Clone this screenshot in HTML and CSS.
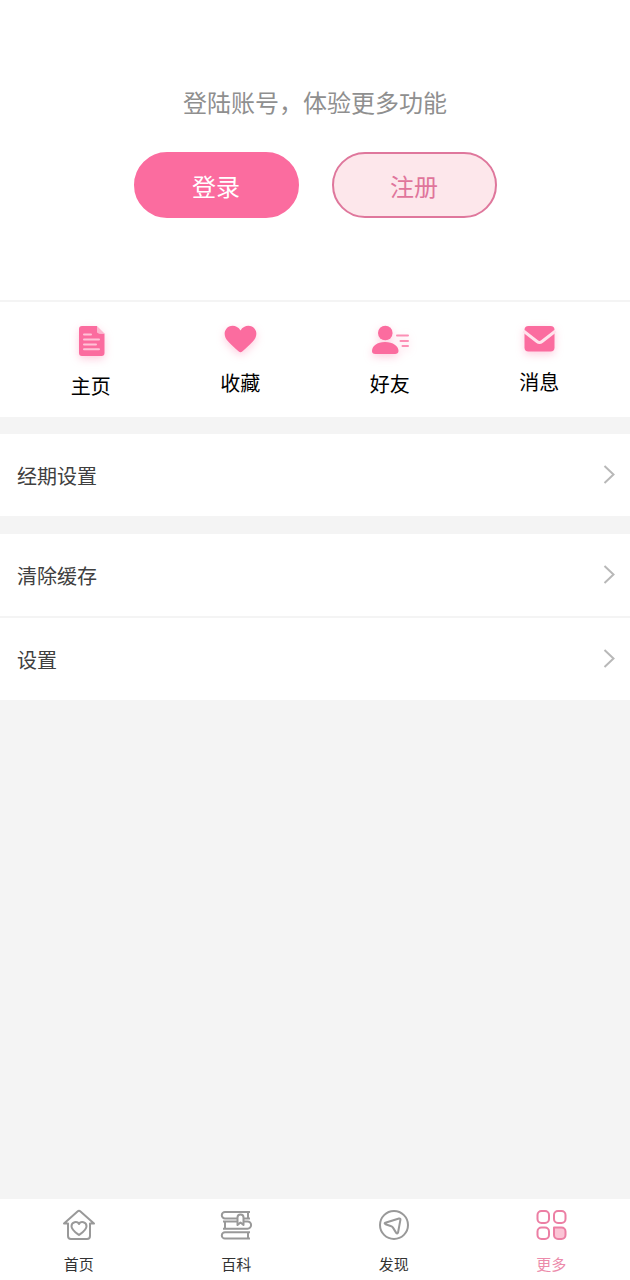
FILE: index.html
```html
<!DOCTYPE html>
<html lang="zh-CN">
<head>
<meta charset="utf-8">
<meta name="viewport" content="width=device-width, initial-scale=1">
<title>更多</title>
<link rel="stylesheet" href="styles.css">
</head>
<body>
<main class="content">
  <section class="account">
    <p class="account-tip">登陆账号，体验更多功能</p>
    <div class="account-actions">
      <button class="btn btn-primary" type="button">登录</button>
      <button class="btn btn-outline" type="button">注册</button>
    </div>
  </section>

  <nav class="shortcuts" aria-label="快捷入口">
    <a class="shortcut" href="#home">
      <svg class="icon" width="48" height="50" viewBox="0 0 48 50" aria-hidden="true">
        <path fill="#fb6c9f" d="M15 4h15v4.500a3 3 0 0 0 3 3H37.500V31a3 3 0 0 1-3 3H15a3 3 0 0 1-3-3V7a3 3 0 0 1 3-3z"/>
        <path fill="#fdb7cf" d="M30 4 37.500 11.500h-5a2.500 2.500 0 0 1-2.500-2.500z"/>
        <path stroke="#ffc3d8" stroke-width="2" stroke-linecap="round" d="M17 12.500h7M17 17.500h15M17 22.500h12M17 27.300h15"/>
      </svg>
      <span>主页</span>
    </a>
    <a class="shortcut" href="#favorites">
      <svg class="icon" width="48" height="47" viewBox="0 0 48 47" aria-hidden="true">
        <path fill="#fb6c9f" d="M24.500 8.500C21 2.500 13.500 2.500 10.200 7c-3 4.200-1.300 9 2 12.600 3 3.400 7 6.700 10.300 9.700 1.500 1.400 2.500 1.400 4 0 3.300-3 7.300-6.300 10.300-9.700 3.300-3.600 5-8.400 2-12.600C35.500 2.500 28 2.500 24.500 8.500z"/>
      </svg>
      <span>收藏</span>
    </a>
    <a class="shortcut" href="#friends">
      <svg class="icon" width="48" height="48" viewBox="0 0 48 48" aria-hidden="true">
        <circle cx="19.300" cy="11" r="7.300" fill="#fb6c9f"/>
        <path fill="#fb6c9f" d="M19 20c8 0 13.500 4 13.500 9 0 2-1.500 3-3.500 3H9.500C7 32 6 31 6 29c0-5 5-9 13-9z"/>
        <path stroke="#fc8fb5" stroke-width="2" stroke-linecap="round" d="M31 13.500h11M34.500 19H42M36.500 24H42"/>
      </svg>
      <span>好友</span>
    </a>
    <a class="shortcut" href="#messages">
      <svg class="icon" width="48" height="46" viewBox="0 0 48 46" aria-hidden="true">
        <rect x="9.500" y="4" width="30" height="25.500" rx="4" fill="#fb6c9f"/>
        <path fill="none" stroke="#ffe3ec" stroke-width="3" d="m8.500 9 13.500 10.500q2.500 2 5 0L40.500 9"/>
      </svg>
      <span>消息</span>
    </a>
  </nav>

  <section class="group">
    <a class="row" href="#period"><span>经期设置</span>
      <svg width="12" height="20" viewBox="0 0 12 20" aria-hidden="true"><path class="chevron" d="m1.500 1 9 8.500-9 8.500"/></svg></a>
  </section>
  <section class="group">
    <a class="row" href="#cache"><span>清除缓存</span>
      <svg width="12" height="20" viewBox="0 0 12 20" aria-hidden="true"><path class="chevron" d="m1.500 1 9 8.500-9 8.500"/></svg></a>
    <a class="row" href="#settings"><span>设置</span>
      <svg width="12" height="20" viewBox="0 0 12 20" aria-hidden="true"><path class="chevron" d="m1.500 1 9 8.500-9 8.500"/></svg></a>
  </section>
</main>

<nav class="tabbar" aria-label="主导航">
  <a class="tab" href="#index">
    <svg class="line-icon" width="36" height="36" viewBox="0 0 36 36" aria-hidden="true">
      <path d="M7 16.500H3L16.500 4.400q1.500-1.300 3 0L33 16.500h-4V29a3 3 0 0 1-3 3H10a3 3 0 0 1-3-3z"/>
      <path d="M18 17c-1.800-3.200-7.500-2.200-7.500 2.300 0 3.700 4 6.200 7.500 8.700 3.500-2.500 7.500-5 7.500-8.700 0-4.500-5.700-5.500-7.500-2.300z"/>
    </svg>
    <span class="tab-label">首页</span>
  </a>
  <a class="tab" href="#wiki">
    <svg class="line-icon" width="36" height="36" viewBox="0 0 36 36" aria-hidden="true">
      <path d="M32 5H7a3.200 3.200 0 0 0 0 6.400h12M25 11.400h7M30 5v6.400"/>
      <path d="M5 14.500h14M25 14.500h4.500a3.600 3.600 0 0 1 0 7.200H5M7 14.500v7.200"/>
      <path d="M32 25.200H7a3.200 3.200 0 0 0 0 6.400h25M30 25.200v6.400"/>
      <path d="M19.500 18V10.500a3 3 0 0 1 6 0V18l-3-2.500z"/>
    </svg>
    <span class="tab-label">百科</span>
  </a>
  <a class="tab" href="#discover">
    <svg class="line-icon" width="36" height="36" viewBox="0 0 36 36" aria-hidden="true">
      <circle cx="18" cy="18" r="14"/>
      <path d="M9.300 15.700 23 11.500q1.700-.4 1.400 1.300L22 25.700q-.7 1.700-1.800.2L16.800 20.400q-.5-.9-1.500-1.200l-5.800-2q-1.600-.9-.2-1.500z"/>
    </svg>
    <span class="tab-label">发现</span>
  </a>
  <a class="tab tab-active" href="#more" aria-current="page">
    <svg class="line-icon" width="36" height="36" viewBox="0 0 36 36" aria-hidden="true">
      <rect x="4.500" y="4" width="11.500" height="12" rx="4"/>
      <rect x="21" y="4" width="11.500" height="12" rx="4"/>
      <rect x="4.500" y="20.500" width="11.500" height="11.500" rx="4"/>
      <path fill="#fbc4d5" d="M21 20.500H28.500a4 4 0 0 1 4 4V28a4 4 0 0 1-4 4H25a4 4 0 0 1-4-4z"/>
    </svg>
    <span class="tab-label">更多</span>
  </a>
</nav>
</body>
</html>
```
FILE: styles.css
```css
* {
  box-sizing: border-box;
}

body {
  display: flex;
  flex-direction: column;
  min-height: 100vh;
  margin: 0;
  background: #f4f4f4;
  color: #000;
  font-family: "Noto Sans CJK SC", sans-serif;
  font-size: 20px;
}

a {
  color: inherit;
  text-decoration: none;
}

svg {
  display: block;
  flex: none;
}

.content {
  flex: 1;
}

.account {
  padding: 84px 16px 82px;
  border-bottom: 2px solid #f4f4f4;
  background: #fff;
  text-align: center;
}

.account-tip {
  margin: 0 0 32px;
  color: #8f8f8f;
  font-size: 24px;
  line-height: 36px;
}

.account-actions {
  display: flex;
  justify-content: center;
  gap: 33px;
}

.btn {
  width: 165px;
  height: 66px;
  padding: 2px 0 0;
  border: 2px solid #fb6c9f;
  border-radius: 33px;
  font-family: inherit;
  font-size: 24px;
  line-height: 36px;
}

.btn-primary {
  background: #fb6c9f;
  color: #fff;
}

.btn-outline {
  border-color: #df779c;
  background: #fde7eb;
  color: #e0759b;
}

.shortcuts {
  display: grid;
  grid-template-columns: repeat(4, 1fr);
  height: 115px;
  padding: 20px 16px 0;
  background: #fff;
}

.shortcut {
  display: flex;
  flex-direction: column;
  align-items: center;
  line-height: 28px;
}

.icon {
  fill: none;
  filter: drop-shadow(0 3px 4px #fb6c9f55);
}

.group {
  margin-top: 17px;
  background: #fff;
}

.group + .group {
  margin-top: 18px;
}

.row {
  display: flex;
  align-items: center;
  justify-content: space-between;
  height: 82px;
  padding: 0 15px 0 17px;
  color: #404040;
}

.row + .row {
  height: 84px;
  border-top: 2px solid #f4f4f4;
}

.chevron {
  fill: none;
  stroke: #b8b8b8;
  stroke-width: 2;
}

.tabbar {
  display: grid;
  grid-template-columns: repeat(4, 1fr);
  padding: 8px 0 5px;
  background: #fff;
}

.tab {
  display: flex;
  flex-direction: column;
  align-items: center;
  gap: 10px;
  color: #333;
}

.line-icon {
  fill: none;
  stroke: #999;
  stroke-width: 2;
  stroke-linejoin: round;
}

.tab-label {
  font-size: 15px;
  line-height: 22px;
}

.tab-active {
  color: #ec8bab;
}

.tab-active .line-icon {
  stroke: #ec7fa4;
}
```
